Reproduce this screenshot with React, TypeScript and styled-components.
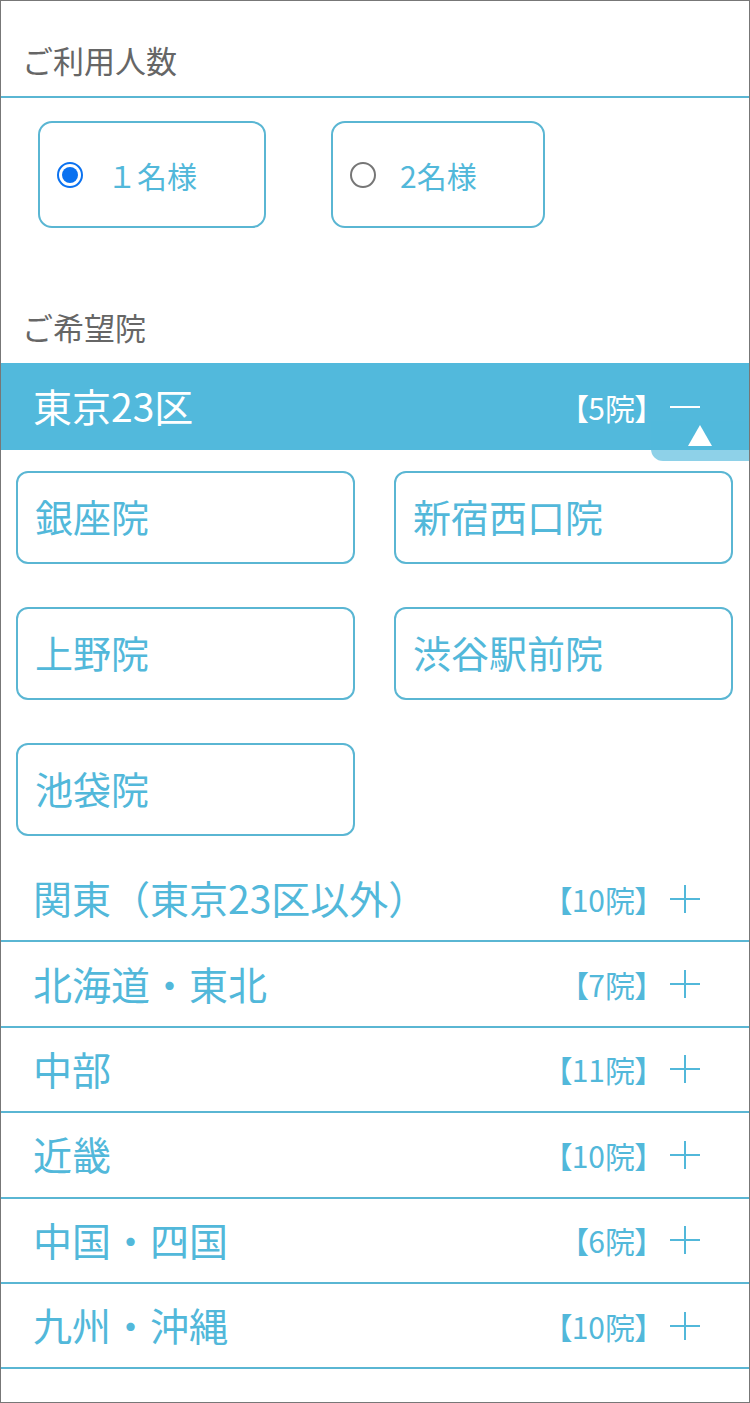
import React from "react";
import styled, { createGlobalStyle } from "styled-components";

const Global = createGlobalStyle`
  html, body { margin: 0; padding: 0; background: #fff; }
  body { font-family: "Noto Sans CJK JP", "Noto Sans", sans-serif; }
  * { box-sizing: border-box; }
`;

const BLUE = "#52b8da";
const LINE = "#5ab6d3";

const Frame = styled.div`
  position: relative;
  width: 750px;
  height: 1403px;
  border: 1px solid #777;
  overflow: hidden;
  background: #fff;
`;

const SectionTitle = styled.h2<{ $line?: boolean }>`
  margin: 0;
  font-weight: 400;
  font-size: 31px;
  line-height: 48px;
  color: #666;
  padding: ${(p) => (p.$line ? "35px 21px 12px" : "0 21px")};
  border-bottom: ${(p) => (p.$line ? `2px solid ${LINE}` : "none")};
`;

const RadioRow = styled.div`
  display: flex;
  gap: 65px;
  padding: 23px 0 0 37px;
  margin-bottom: 75px;
`;

const RadioBox = styled.label<{ $w: number }>`
  display: flex;
  align-items: center;
  width: ${(p) => p.$w}px;
  height: 107px;
  border: 2px solid ${LINE};
  border-radius: 14px;
  padding-left: 17px;
  gap: 24px;
  color: ${BLUE};
  font-size: 30px;
  cursor: pointer;
`;

const RadioDot = styled.span<{ $on?: boolean }>`
  flex: none;
  width: 26px;
  height: 26px;
  border-radius: 50%;
  border: 2px solid ${(p) => (p.$on ? "#0b72f0" : "#767676")};
  display: flex;
  align-items: center;
  justify-content: center;
  &::after {
    content: "";
    width: 16px;
    height: 16px;
    border-radius: 50%;
    background: ${(p) => (p.$on ? "#0b72f0" : "transparent")};
  }
`;

const Bar = styled.div`
  margin-top: 12px;
  height: 87px;
  background: #52b9dc;
  color: #fff;
  display: flex;
  align-items: center;
  padding: 0 49px 0 32px;
`;

const RegionName = styled.span`
  flex: 1;
  font-size: 39px;
  line-height: 1;
  padding-bottom: 2px;
`;

const Count = styled.span`
  font-size: 30px;
  font-feature-settings: "palt";
  margin-right: 20px;
  line-height: 1;
`;

const Sign = styled.span<{ $plus?: boolean; $color: string }>`
  position: relative;
  width: 30px;
  height: 28px;
  flex: none;
  &::before {
    content: "";
    position: absolute;
    left: 0;
    right: 0;
    top: 13px;
    height: 2px;
    background: ${(p) => p.$color};
  }
  &::after {
    content: "";
    display: ${(p) => (p.$plus ? "block" : "none")};
    position: absolute;
    top: 0;
    bottom: 0;
    left: 14px;
    width: 2px;
    background: ${(p) => p.$color};
  }
`;

const ClinicGrid = styled.div`
  display: grid;
  grid-template-columns: 339px 339px;
  column-gap: 39px;
  row-gap: 43px;
  padding: 21px 0 0 15px;
`;

const ClinicButton = styled.button`
  height: 93px;
  border: 2px solid ${LINE};
  border-radius: 12px;
  background: #fff;
  color: ${BLUE};
  font-family: inherit;
  font-size: 38px;
  text-align: left;
  padding: 0 0 4px 17px;
  cursor: pointer;
`;

const RegionList = styled.ul`
  list-style: none;
  margin: 21px 0 0;
  padding: 0;
`;

const RegionRow = styled.li`
  height: 85.4px;
  border-bottom: 2px solid ${LINE};
  display: flex;
  align-items: center;
  padding: 0 49px 0 32px;
  color: ${BLUE};
`;

const TopButton = styled.div`
  position: absolute;
  right: 0;
  top: 420px;
  width: 98px;
  height: 40px;
  background: rgba(82, 185, 220, 0.65);
  border-bottom-left-radius: 12px;
  display: flex;
  justify-content: center;
  padding-top: 4px;
`;

const Triangle = styled.span`
  width: 0;
  height: 0;
  border-left: 12px solid transparent;
  border-right: 12px solid transparent;
  border-bottom: 21px solid #fff;
`;

const clinics = ["銀座院", "新宿西口院", "上野院", "渋谷駅前院", "池袋院"];
const regions: [string, number][] = [
  ["関東（東京23区以外）", 10],
  ["北海道・東北", 7],
  ["中部", 11],
  ["近畿", 10],
  ["中国・四国", 6],
  ["九州・沖縄", 10],
];

export default function App() {
  return (
    <>
      <Global />
      <Frame>
        <SectionTitle $line>ご利用人数</SectionTitle>
        <RadioRow>
          <RadioBox $w={228}>
            <RadioDot $on />
            <span>１名様</span>
          </RadioBox>
          <RadioBox $w={214}>
            <RadioDot />
            <span>2名様</span>
          </RadioBox>
        </RadioRow>
        <SectionTitle>ご希望院</SectionTitle>
        <Bar>
          <RegionName>東京23区</RegionName>
          <Count>【5院】</Count>
          <Sign $color="#fff" />
        </Bar>
        <ClinicGrid>
          {clinics.map((c) => (
            <ClinicButton key={c}>{c}</ClinicButton>
          ))}
        </ClinicGrid>
        <RegionList>
          {regions.map(([name, n]) => (
            <RegionRow key={name}>
              <RegionName>{name}</RegionName>
              <Count>【{n}院】</Count>
              <Sign $plus $color={BLUE} />
            </RegionRow>
          ))}
        </RegionList>
        <TopButton>
          <Triangle />
        </TopButton>
      </Frame>
    </>
  );
}
